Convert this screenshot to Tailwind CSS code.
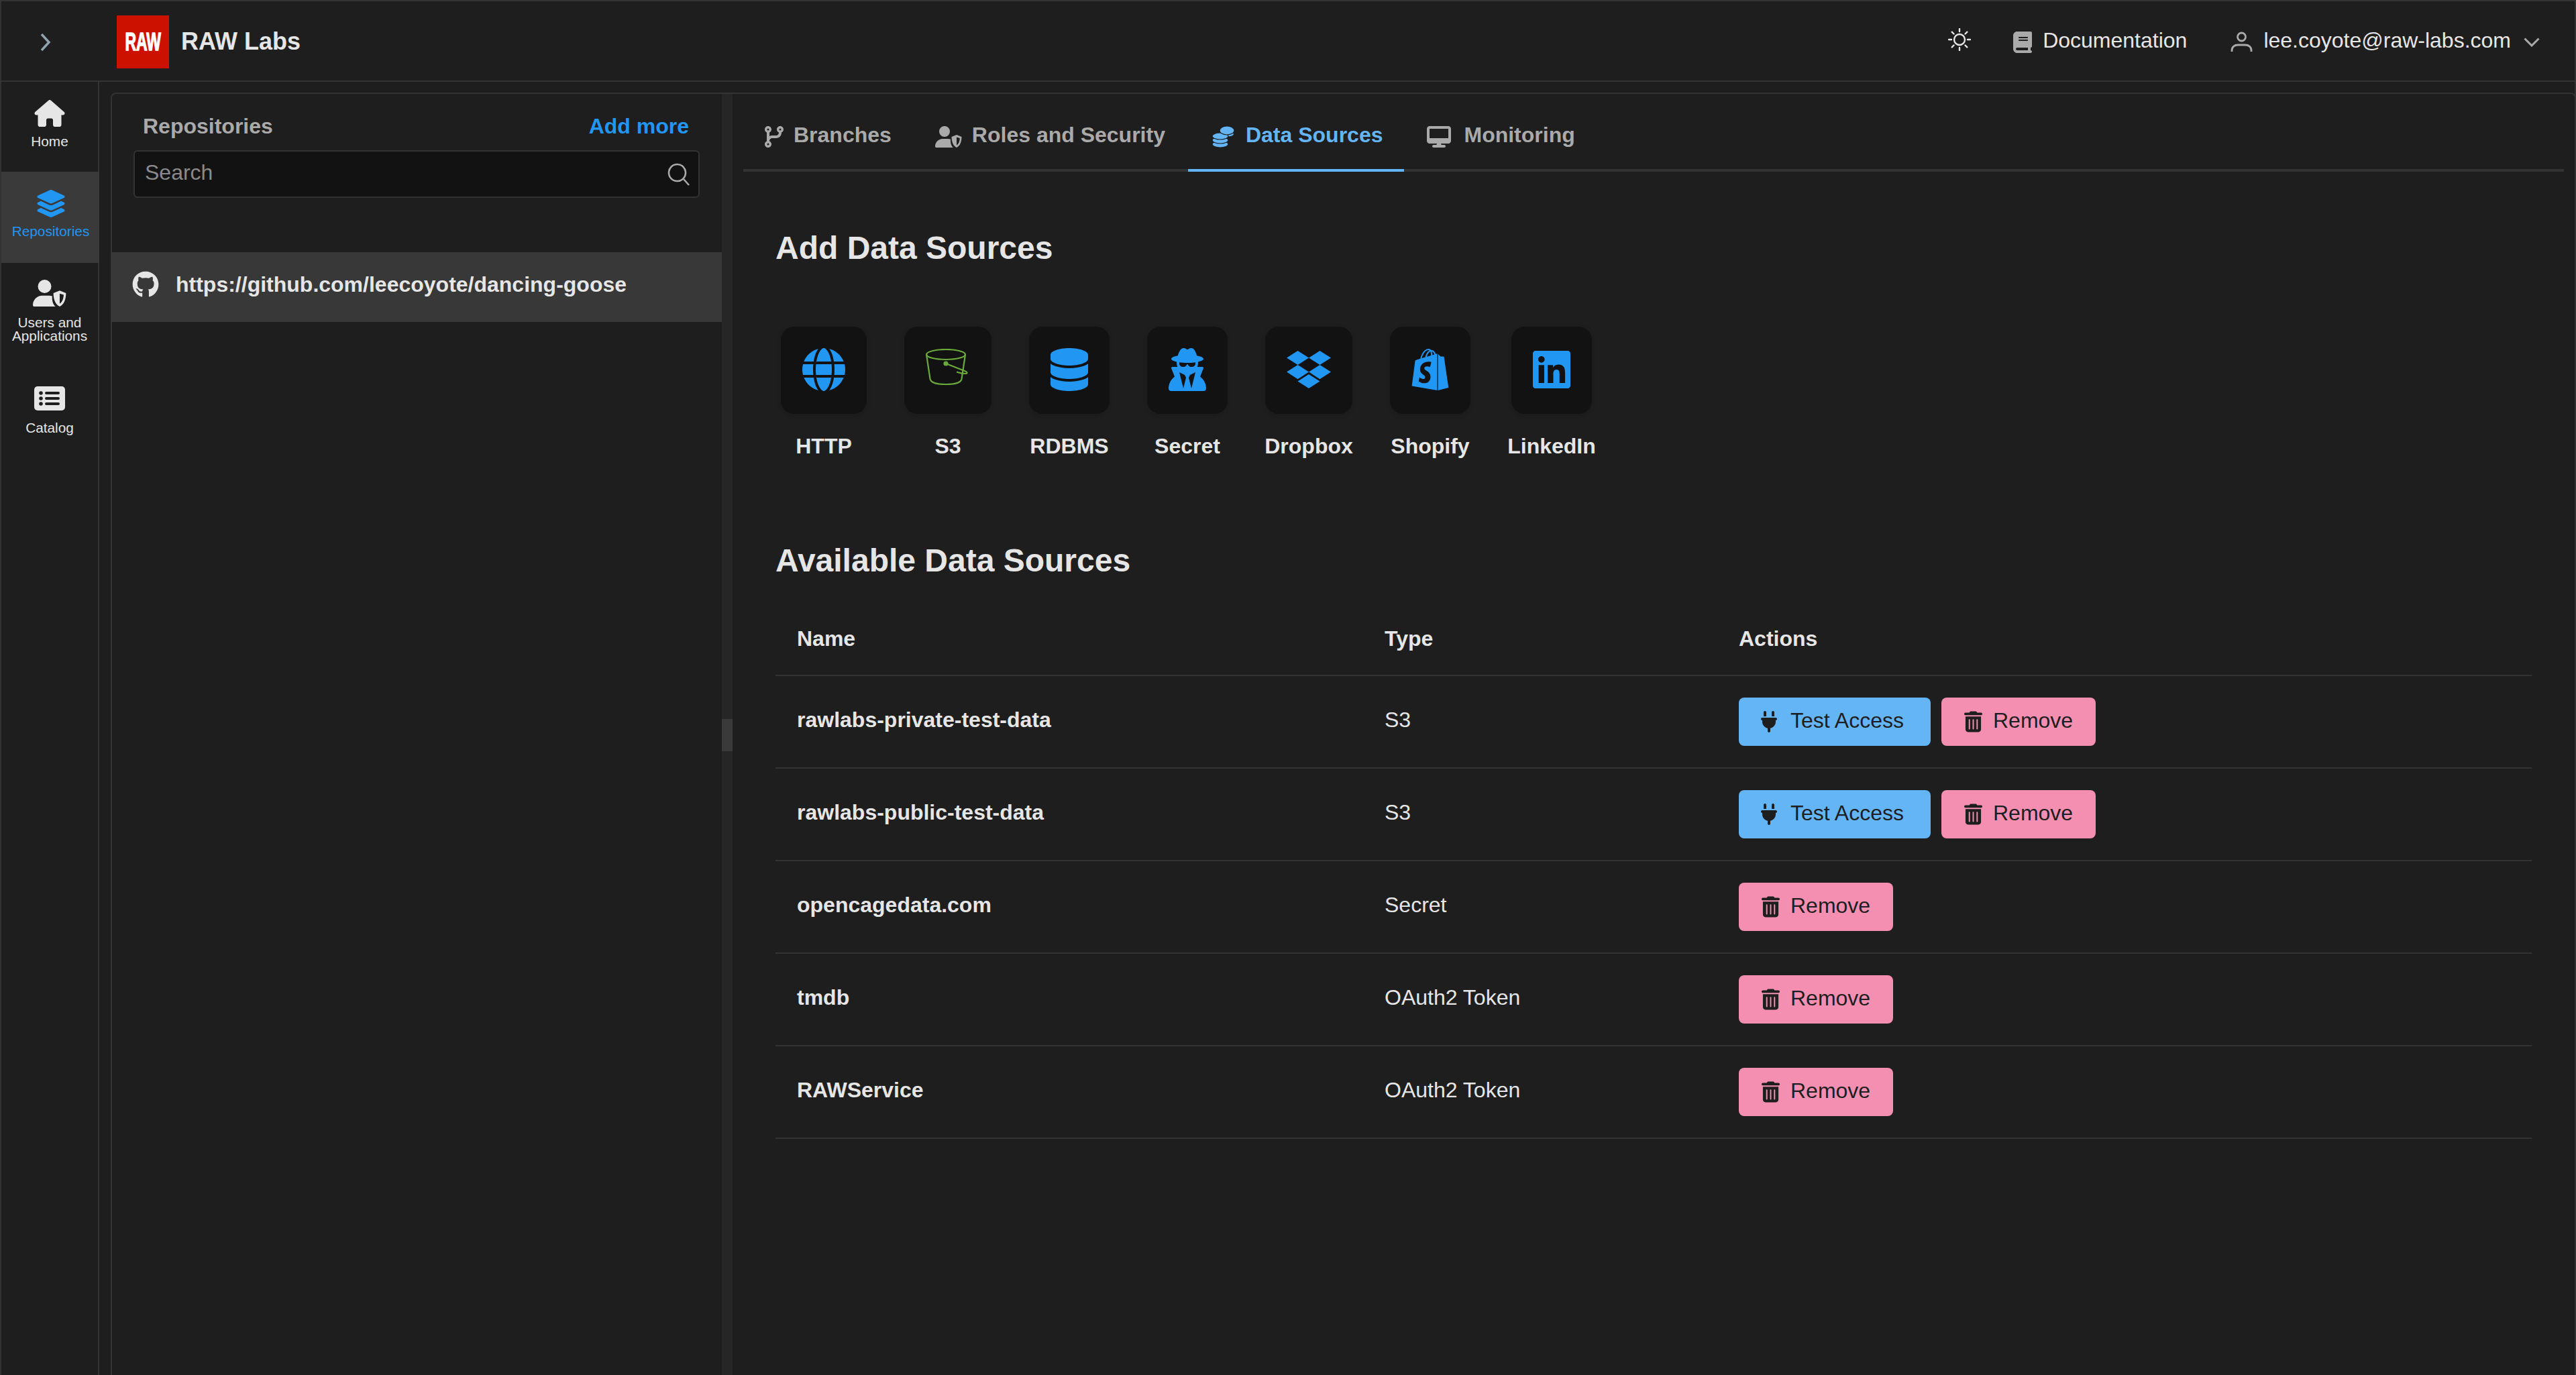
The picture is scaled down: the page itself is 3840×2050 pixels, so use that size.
<!doctype html>
<html>
<head>
<meta charset="utf-8">
<script src="https://cdn.jsdelivr.net/npm/@tailwindcss/browser@4"></script>
</head>
<body class="m-0 bg-[#1e1e1e]">
<div class="w-[3840px] h-[2050px] overflow-hidden flex flex-col bg-[#1e1e1e] border-t-2 border-l-2 border-r-2 border-[#333] text-[#e6e6e6] font-['Liberation_Sans',sans-serif]">

  <!-- Header -->
  <header class="h-[120px] shrink-0 flex items-center border-b-2 border-[#333]">
    <div class="w-[144px] shrink-0 flex justify-center">
      <svg class="w-[16px] h-[26px] ml-[-12px] mt-[3px]" viewBox="0 0 16 26" fill="none" stroke="#90a4ae" stroke-width="3.500"><path d="M2 1l11 12L2 25"/></svg>
    </div>
    <div class="w-[78px] h-[79px] ml-[28px] mt-[2px] bg-[#cc1100] flex items-center justify-center overflow-hidden">
      <span class="text-white font-bold text-[37px] leading-none [-webkit-text-stroke:1.500px_white] [transform:scaleX(0.62)]">RAW</span>
    </div>
    <span class="ml-[18px] mt-[2px] text-[36px] font-bold">RAW Labs</span>
    <div class="ml-auto flex items-center h-full">
      <svg class="w-[34px] h-[34px] mb-[5px]" viewBox="0 0 34 34" fill="none" stroke="#e6e6e6" stroke-width="2.400" stroke-linecap="round"><circle cx="17" cy="17" r="8"/><path d="M17 1v4M17 29v4M1 17h4M29 17h4M5.700 5.700l2.800 2.800M25.500 25.500l2.800 2.800M5.700 28.300l2.800-2.800M25.500 8.500l2.800-2.800"/></svg>
      <svg class="w-[28px] h-[32px] ml-[63px] mt-[3px]" viewBox="0 0 448 512" fill="#aaa"><path d="M96 0C43 0 0 43 0 96V416c0 53 43 96 96 96H384h32c17.700 0 32-14.300 32-32s-14.300-32-32-32V384c17.700 0 32-14.300 32-32V32c0-17.700-14.300-32-32-32H384 96zm0 384H352v64H96c-17.700 0-32-14.300-32-32s14.300-32 32-32zm32-240c0-8.800 7.200-16 16-16H336c8.800 0 16 7.200 16 16s-7.200 16-16 16H144c-8.800 0-16-7.200-16-16zm16 48H336c8.800 0 16 7.200 16 16s-7.200 16-16 16H144c-8.800 0-16-7.200-16-16s7.200-16 16-16z"/></svg>
      <span class="ml-[16px] text-[32px] mb-[3px]">Documentation</span>
      <svg class="w-[33px] h-[30px] ml-[65px] mt-[2px]" viewBox="0 0 33 30" fill="none" stroke="#aaa" stroke-width="2.800"><circle cx="16.500" cy="8" r="6"/><path d="M2 30v-2c0-5 4-8 9-8h11c5 0 9 3 9 8v2"/></svg>
      <span class="ml-[16px] text-[32px] mb-[3px]">lee.coyote@raw-labs.com</span>
      <svg class="w-[24px] h-[14px] ml-[19px] mr-[52px] mt-[3px]" viewBox="0 0 24 14" fill="none" stroke="#aaa" stroke-width="3"><path d="M1.500 1.500L12 12 22.500 1.500"/></svg>
    </div>
  </header>

  <div class="flex-1 flex min-h-0">
    <!-- Nav rail -->
    <nav class="w-[146px] shrink-0 border-r-2 border-[#333] flex flex-col text-[20.800px] leading-[20px] text-center">
      <a class="h-[134px] flex flex-col items-center pt-[27px]">
        <svg class="w-[46px] h-[40px]" viewBox="0 0 576 512" fill="#e6e6e6"><path d="M575.800 255.500c0 18-15 32.100-32 32.100h-32l.7 160.200c0 2.700-.2 5.400-.5 8.100V472c0 22.100-17.900 40-40 40H456c-1.100 0-2.200 0-3.300-.1c-1.400 .1-2.800 .1-4.200 .1H416 392c-22.100 0-40-17.900-40-40V448 384c0-17.700-14.300-32-32-32H256c-17.700 0-32 14.300-32 32v64 24c0 22.100-17.900 40-40 40H160 128.100c-1.500 0-3-.1-4.500-.2c-1.200 .1-2.400 .2-3.600 .2H104c-22.100 0-40-17.900-40-40V360c0-.9 0-1.900 .1-2.800V287.600H32c-18 0-32-14-32-32.100c0-9 3-17 10-24L266.400 8c7-7 15-8 22-8s15 2 21 7L564.800 231.500c8 7 12 15 11 24z"/></svg>
        <span class="mt-[12px]">Home</span>
      </a>
      <a class="h-[136px] bg-[#3a3a3a] ml-[-2px] mr-[-2px] pl-[3px] flex flex-col items-center pt-[27px] text-[#2196f3]">
        <svg class="w-[46px] h-[41px]" viewBox="0 0 576 512" fill="#2196f3"><path d="M264.500 5.200c14.900-6.900 32.100-6.900 47 0l218.600 101c8.500 3.900 13.900 12.400 13.900 21.800s-5.400 17.900-13.900 21.800l-218.600 101c-14.900 6.900-32.100 6.900-47 0L45.900 149.800C37.400 145.800 32 137.300 32 128s5.400-17.900 13.900-21.800L264.500 5.200zM476.900 209.600l53.200 24.600c8.500 3.900 13.900 12.400 13.900 21.800s-5.400 17.900-13.900 21.800l-218.600 101c-14.900 6.900-32.100 6.900-47 0L45.900 277.800C37.400 273.800 32 265.300 32 256s5.400-17.900 13.900-21.800l53.200-24.600 152 70.200c23.400 10.800 50.400 10.800 73.800 0l152-70.200zm-152 198.200l152-70.200 53.200 24.600c8.500 3.900 13.900 12.400 13.900 21.800s-5.400 17.900-13.900 21.800l-218.600 101c-14.900 6.900-32.100 6.900-47 0L45.900 405.800C37.400 401.800 32 393.300 32 384s5.400-17.900 13.900-21.800l53.200-24.600 152 70.200c23.400 10.800 50.400 10.800 73.800 0z"/></svg>
        <span class="mt-[11px]">Repositories</span>
      </a>
      <a class="h-[160px] flex flex-col items-center pt-[25px]">
        <svg class="w-[50px] h-[40px]" viewBox="0 0 640 512" fill="#e6e6e6"><path d="M224 256A128 128 0 1 0 224 0a128 128 0 1 0 0 256zm-45.700 48C79.800 304 0 383.800 0 482.300C0 498.700 13.300 512 29.700 512H432c-30-22-60-70-64-150c-1-20 0-40 2-48c-20-6-40-10-60-10H178.300z"/><path fill-rule="evenodd" d="M512 208L392 256c0 120 40 220 120 256c80-36 120-136 120-256L512 208zm0 56v192c50-28 72-90 76-168L512 264z"/></svg>
        <span class="mt-[14px]">Users and<br>Applications</span>
      </a>
      <a class="h-[136px] flex flex-col items-center pt-[24px]">
        <svg class="w-[46px] h-[36px]" viewBox="0 0 46 36"><rect width="46" height="36" rx="5" fill="#e6e6e6"/><circle cx="10" cy="10" r="2.800" fill="#1e1e1e"/><circle cx="10" cy="18" r="2.800" fill="#1e1e1e"/><circle cx="10" cy="26" r="2.800" fill="#1e1e1e"/><rect x="16" y="8" width="22" height="4" rx="2" fill="#1e1e1e"/><rect x="16" y="16" width="22" height="4" rx="2" fill="#1e1e1e"/><rect x="16" y="24" width="22" height="4" rx="2" fill="#1e1e1e"/></svg>
        <span class="mt-[16px]">Catalog</span>
      </a>
    </nav>

    <!-- Main card -->
    <div class="flex-1 min-w-0 flex ml-[17px] mt-[16px] mr-[-2px] border-l-2 border-t-2 border-r-2 border-[#333] rounded-tl-[8px] rounded-tr-[8px]">
      <!-- Repositories panel -->
      <aside class="w-[909px] shrink-0 flex flex-col">
        <div class="h-[69px] flex items-center justify-between pl-[46px] pr-[49px] pt-[26px] text-[32px] font-bold">
          <span class="text-[#aaa]">Repositories</span>
          <span class="text-[#2196f3]">Add more</span>
        </div>
        <div class="ml-[32px] mr-[33px] mt-[15px] h-[71px] flex items-center justify-between pl-[15px] pr-[16px] bg-[#121212] border-2 border-[#333] rounded-[6px]">
          <span class="text-[32px] text-[#8a8a8a] mb-[6px]">Search</span>
          <svg class="w-[34px] h-[34px] mr-[-4px]" viewBox="0 0 34 34" fill="none" stroke="#aaa" stroke-width="2.600"><circle cx="14.500" cy="14.500" r="12.500"/><path d="M24 24l8 9"/></svg>
        </div>
        <div class="mt-[81px] h-[104px] bg-[#383838] flex items-center pl-[30px] ml-[-2px] text-[32px] font-bold">
          <svg class="w-[40px] h-[40px] mb-[8px] ml-[2px]" viewBox="0 0 496 512" fill="#e6e6e6"><path d="M165.900 397.400c0 2-2.300 3.600-5.200 3.600-3.300 0-5.600-1.600-5.600-3.600 0-2 2.300-3.600 5.200-3.600 3-.3 5.600 1.300 5.600 3.600zm-31.100-4.500c-.7 2 1.300 4.300 4.300 4.900 2.600 1 5.600 0 6.200-2s-1.300-4.300-4.300-5c-2.600-.7-5.500.3-6.200 2.100zm44.200-1.700c-2.900.7-4.900 2.600-4.600 4.900.3 2 2.900 3.300 5.900 2.600 2.900-.7 4.900-2.600 4.600-4.600-.3-1.900-3-3.200-5.900-2.900zM244.800 8C106.100 8 0 113.300 0 252c0 110.900 69.800 205.800 169.500 239.200 12.800 2.300 17.300-5.600 17.300-12.100 0-6.200-.3-40.400-.3-61.400 0 0-70 15-84.700-29.800 0 0-11.400-29.100-27.800-36.600 0 0-22.900-15.700 1.600-15.400 0 0 24.900 2 38.600 25.800 21.900 38.600 58.600 27.500 72.900 20.900 2.300-16 8.800-27.100 16-33.700-55.900-6.200-112.300-14.300-112.300-110.500 0-27.500 7.600-41.300 23.600-58.900-2.600-6.500-11.100-33.300 2.600-67.900 20.900-6.500 69 27 69 27 20-5.600 41.500-8.500 62.800-8.500s42.800 2.900 62.800 8.500c0 0 48.100-33.600 69-27 13.700 34.700 5.200 61.400 2.600 67.900 16 17.700 25.800 31.500 25.800 58.900 0 96.500-58.900 104.200-114.800 110.500 9.200 7.900 17 22.900 17 46.400 0 33.700-.3 75.400-.3 83.600 0 6.500 4.600 14.400 17.300 12.100C428.200 457.800 496 362.900 496 252 496 113.300 383.500 8 244.800 8z"/></svg>
          <span class="ml-[25px] mt-[-8px]">https://github.com/leecoyote/dancing-goose</span>
        </div>
      </aside>

      <!-- Splitter -->
      <div class="w-[16px] shrink-0 bg-[#262626] pt-[932px]">
        <div class="w-full h-[48px] bg-[#3a3a3a]"></div>
      </div>

      <!-- Right panel -->
      <main class="flex-1 min-w-0 flex flex-col pl-[16px] pr-[16px]">
        <div class="h-[116px] shrink-0 flex border-b-[4px] border-[#333] text-[32px] font-bold text-[#aaa]">
          <a class="h-[116px] flex items-center pl-[32px] pr-[32px] pt-[10px] border-b-[4px] border-transparent">
            <svg class="w-[28px] h-[32px] mt-[6px]" viewBox="0 0 448 512" fill="#aaa"><path d="M80 104a24 24 0 1 0 0-48 24 24 0 1 0 0 48zm80-24c0 32.800-19.700 61-48 73.300v87.800c18.800-10.900 40.700-17.100 64-17.100h96c35.300 0 64-28.700 64-64v-6.700C307.700 141 288 112.800 288 80c0-44.200 35.800-80 80-80s80 35.800 80 80c0 32.800-19.700 61-48 73.300V160c0 70.700-57.300 128-128 128H176c-35.300 0-64 28.700-64 64v6.700c28.300 12.300 48 40.500 48 73.300c0 44.200-35.800 80-80 80s-80-35.800-80-80c0-32.800 19.700-61 48-73.300V352 153.300C19.700 141 0 112.800 0 80C0 35.800 35.800 0 80 0s80 35.800 80 80zm232 0a24 24 0 1 0 -48 0 24 24 0 1 0 48 0zM80 456a24 24 0 1 0 0-48 24 24 0 1 0 0 48z"/></svg>
            <span class="ml-[15px]">Branches</span>
          </a>
          <a class="h-[116px] flex items-center pl-[33px] pr-[34px] pt-[10px] border-b-[4px] border-transparent">
            <svg class="w-[40px] h-[32px] mt-[6px]" viewBox="0 0 640 512" fill="#aaa"><path d="M224 256A128 128 0 1 0 224 0a128 128 0 1 0 0 256zm-45.700 48C79.800 304 0 383.800 0 482.300C0 498.700 13.300 512 29.700 512H432c-30-22-60-70-64-150c-1-20 0-40 2-48c-20-6-40-10-60-10H178.300z"/><path fill-rule="evenodd" d="M512 208L392 256c0 120 40 220 120 256c80-36 120-136 120-256L512 208zm0 56v192c50-28 72-90 76-168L512 264z"/></svg>
            <span class="ml-[15px]">Roles and Security</span>
          </a>
          <a class="h-[116px] flex items-center pl-[35px] pr-[32px] pt-[10px] text-[#64b5f6] border-b-[4px] border-[#64b5f6]">
            <svg class="w-[34px] h-[32px] mt-[6px]" viewBox="0 0 34 32" fill="#64b5f6" stroke="#1e1e1e" stroke-width="1.200"><ellipse cx="25" cy="12" rx="8.500" ry="4"/><ellipse cx="13" cy="27" rx="12" ry="5"/><ellipse cx="13" cy="21" rx="12" ry="5"/><ellipse cx="13" cy="15" rx="12" ry="5"/><ellipse cx="23" cy="6.500" rx="11" ry="6.500"/></svg>
            <span class="ml-[17px]">Data Sources</span>
          </a>
          <a class="h-[116px] flex items-center pl-[34px] pr-[32px] pt-[10px] border-b-[4px] border-transparent">
            <svg class="w-[36px] h-[32px] mt-[6px]" viewBox="0 0 576 512" fill="#aaa"><path d="M64 0C28.700 0 0 28.700 0 64V352c0 35.300 28.700 64 64 64H240l-10.700 32H160c-17.700 0-32 14.300-32 32s14.300 32 32 32H416c17.700 0 32-14.300 32-32s-14.300-32-32-32H346.700L336 416H512c35.300 0 64-28.700 64-64V64c0-35.300-28.700-64-64-64H64zM512 64V288H64V64H512z"/></svg>
            <span class="ml-[19px]">Monitoring</span>
          </a>
        </div>

        <div class="pl-[48px] pr-[48px]">
          <h2 class="text-[48px] leading-[56px] font-bold mt-[86px]">Add Data Sources</h2>

          <div class="flex gap-[56px] ml-[8px] mt-[89px] text-[32px] font-bold text-center">
            <div class="w-[128px] flex flex-col items-center">
              <div class="w-[128px] h-[130px] rounded-[20px] bg-[#121212] flex items-center justify-center shadow-[0_2px_6px_rgba(0,0,0,0.15)]">
                <svg class="w-[64px] h-[64px] mt-[-2px]" viewBox="0 0 512 512" fill="#2196f3"><path d="M352 256c0 22.200-1.200 43.600-3.300 64H163.300c-2.200-20.400-3.300-41.800-3.300-64s1.200-43.600 3.300-64H348.700c2.200 20.400 3.300 41.800 3.300 64zm28.800-64H503.900c5.300 20.500 8.100 41.900 8.100 64s-2.800 43.500-8.100 64H380.800c2.100-20.600 3.200-42 3.200-64s-1.100-43.400-3.200-64zm112.600-32H376.700c-10-63.900-29.800-117.400-55.300-151.600c78.300 20.700 142 77.500 171.900 151.600zm-149.100 0H167.700c6.100-36.400 15.500-68.600 27-94.700c10.500-23.600 22.200-40.700 33.500-51.500C239.400 3.200 248.700 0 256 0s16.600 3.200 27.800 13.800c11.300 10.800 23 27.900 33.500 51.500c11.600 26 20.900 58.200 27 94.700zm-209 0H18.600C48.600 85.900 112.200 29.100 190.600 8.400C165.100 42.600 145.300 96.100 135.300 160zM8.100 192H131.200c-2.100 20.600-3.200 42-3.200 64s1.100 43.400 3.200 64H8.100C2.800 299.500 0 278.100 0 256s2.800-43.500 8.100-64zM194.700 446.600c-11.600-26-20.900-58.200-27-94.600H344.300c-6.100 36.400-15.500 68.600-27 94.600c-10.500 23.600-22.200 40.700-33.500 51.500C272.600 508.800 263.300 512 256 512s-16.600-3.200-27.800-13.800c-11.300-10.800-23-27.900-33.500-51.500zM135.300 352c10 63.900 29.800 117.400 55.300 151.600C112.200 482.900 48.600 426.100 18.600 352H135.300zm358.100 0c-30 74.100-93.600 130.900-171.900 151.600c25.500-34.200 45.200-87.700 55.300-151.600H493.400z"/></svg>
              </div>
              <span class="mt-[24px]">HTTP</span>
            </div>
            <div class="w-[130px] flex flex-col items-center">
              <div class="w-[130px] h-[130px] rounded-[20px] bg-[#121212] flex items-center justify-center shadow-[0_2px_6px_rgba(0,0,0,0.15)]">
                <svg class="w-[64px] h-[54px] mt-[-11px] mr-[2px]" viewBox="0 0 64 54" fill="none" stroke="#6aaa3a" stroke-width="2.200"><ellipse cx="30" cy="8.500" rx="29" ry="7.500"/><path d="M1 8.500L6.500 45c1 5 9 8 23.500 8s22.500-3 23.500-8L59 8.500"/><path d="M30 22l28 11c4 1.500 5 4 1 4-4 0-9-1-13-2.500"/><circle cx="30" cy="22" r="2.500" fill="#6aaa3a"/></svg>
              </div>
              <span class="mt-[24px]">S3</span>
            </div>
            <div class="w-[120px] flex flex-col items-center">
              <div class="w-[120px] h-[130px] rounded-[20px] bg-[#121212] flex items-center justify-center shadow-[0_2px_6px_rgba(0,0,0,0.15)]">
                <svg class="w-[56px] h-[64px] mt-[-2px]" viewBox="0 0 448 512" fill="#2196f3"><path d="M448 80v48c0 44.200-100.300 80-224 80S0 172.200 0 128V80C0 35.800 100.300 0 224 0S448 35.800 448 80zM393.200 214.700c20.800-7.400 39.900-16.900 54.800-28.600V288c0 44.200-100.300 80-224 80S0 332.200 0 288V186.100c14.900 11.800 34 21.200 54.800 28.600C99.700 230.700 159.500 240 224 240s124.300-9.300 169.200-25.300zM0 346.100c14.900 11.800 34 21.200 54.800 28.600C99.700 390.700 159.500 400 224 400s124.300-9.300 169.200-25.300c20.800-7.400 39.900-16.900 54.800-28.600V432c0 44.200-100.300 80-224 80S0 476.200 0 432V346.100z"/></svg>
              </div>
              <span class="mt-[24px]">RDBMS</span>
            </div>
            <div class="w-[120px] flex flex-col items-center">
              <div class="w-[120px] h-[130px] rounded-[20px] bg-[#121212] flex items-center justify-center shadow-[0_2px_6px_rgba(0,0,0,0.15)]">
                <svg class="w-[56px] h-[64px] mt-[-2px]" viewBox="0 0 448 512" fill="#2196f3"><path d="M224 16c-6.700 0-10.800-2.800-15.500-6.100C201.900 5.400 194 0 176 0c-30.500 0-52 43.700-66 89.400C62.700 98.100 32 112.200 32 128c0 14.300 25 27.100 64.600 35.900c-.4 4-.6 8-.6 12.100c0 17 3.300 33.200 9.300 48H45.400C38 224 32 230 32 237.400c0 1.700 .3 3.400 1 5l38.800 96.900C28.200 371.800 0 423.800 0 482.300C0 498.700 13.300 512 29.700 512H418.300c16.400 0 29.700-13.300 29.700-29.700c0-58.500-28.200-110.400-71.700-143L415 242.400c.6-1.600 1-3.300 1-5c0-7.400-6-13.400-13.400-13.400H342.700c6-14.800 9.300-31 9.300-48c0-4.100-.2-8.100-.6-12.100C391 155.100 416 142.300 416 128c0-15.800-30.700-29.900-78-38.600C324 43.700 302.500 0 272 0c-18 0-25.900 5.400-32.500 9.900c-4.800 3.300-8.800 6.100-15.500 6.100zm56 208H267.600c-16.500 0-31.100-10.600-36.300-26.200c-2.300-7-12.200-7-14.500 0c-5.200 15.600-19.900 26.200-36.300 26.200H168c-22.100 0-40-17.900-40-40V169.600c28.200 4.100 61 6.400 96 6.400s67.800-2.300 96-6.400V184c0 22.100-17.900 40-40 40zm-88 96l16 32L176 480 128 288l64 32zm128-32L272 480 240 352l16-32 64-32z"/></svg>
              </div>
              <span class="mt-[24px]">Secret</span>
            </div>
            <div class="w-[130px] flex flex-col items-center">
              <div class="w-[130px] h-[130px] rounded-[20px] bg-[#121212] flex items-center justify-center shadow-[0_2px_6px_rgba(0,0,0,0.15)]">
                <svg class="w-[66px] h-[64px] mt-[-2px]" viewBox="0 0 528 512" fill="#2196f3"><path d="M264.400 116.300l-132 84.300 132 84.300-132 84.300L0 284.100l132.300-84.300L0 116.300 132.300 32l132.100 84.300zM131.600 395.700l132-84.300 132 84.300-132 84.300-132-84.300zm132.800-111.600l132-84.300-132-83.600L395.700 32 528 116.300l-132.300 84.300L528 284.800l-132.300 84.300-131.300-85z"/></svg>
              </div>
              <span class="mt-[24px]">Dropbox</span>
            </div>
            <div class="w-[120px] flex flex-col items-center">
              <div class="w-[120px] h-[130px] rounded-[20px] bg-[#121212] flex items-center justify-center shadow-[0_2px_6px_rgba(0,0,0,0.15)]">
                <svg class="w-[56px] h-[64px] mt-[-2px]" viewBox="0 0 448 512" fill="#2196f3"><path d="M388.320 104.100a4.660 4.660 0 0 0-4.400-4c-2 0-37.230-.8-37.230-.8s-21.610-20.820-29.620-28.830V503.200L442.760 472S388.720 106.500 388.320 104.100ZM288.650 70.470a116.670 116.670 0 0 0-7.210-17.610C271 32.850 255.420 22 237 22a15 15 0 0 0-4 .4c-.4-.8-1.200-1.200-1.600-2C223.400 11.630 213 7.630 200.580 8c-24 .8-48 18-67.250 48.830-13.610 21.620-24 48.840-26.820 70.060-27.620 8.400-46.830 14.410-47.230 14.810-14 4.400-14.410 4.800-16 18-1.200 10-38 291.820-38 291.820L307.860 504V65.670a41.660 41.660 0 0 0-4.400.4S297.860 67.670 288.650 70.470ZM233.410 87.690c-16 4.800-33.630 10.400-50.840 15.610 4.800-18.820 14.410-37.630 25.620-50 4.400-4.400 10.410-9.610 17.210-12.810C232.210 54.860 233.810 74.480 233.410 87.690ZM200.580 24.440A27.490 27.490 0 0 1 215 28c-6.400 3.200-12.810 8.410-18.810 14.410-15.210 16.420-26.820 42-31.620 66.450-14.420 4.410-28.830 8.810-42 12.810C131.330 83.280 163.750 25.240 200.580 24.440ZM154.150 244.610c1.600 25.610 69.250 31.220 73.250 91.660 2.800 47.640-25.220 80.060-65.650 82.470-48.830 3.200-75.650-25.620-75.650-25.620l10.400-44s26.820 20.420 48.440 18.820c14-.8 19.220-12.410 18.810-20.420-2-33.620-57.240-31.620-60.840-86.860-3.200-46.440 27.220-93.270 94.470-97.680 26-1.600 39.230 4.810 39.230 4.810L221.400 225.390s-17.210-8-37.630-6.400C154.150 221 153.750 239.800 154.150 244.610ZM249.420 82.880c0-12-1.600-29.220-7.210-43.630 18.420 3.600 27.220 24 31.230 36.430Q262.630 78.680 249.420 82.880Z"/></svg>
              </div>
              <span class="mt-[24px]">Shopify</span>
            </div>
            <div class="w-[130px] flex flex-col items-center">
              <div class="w-[120px] h-[130px] rounded-[20px] bg-[#121212] flex items-center justify-center shadow-[0_2px_6px_rgba(0,0,0,0.15)]">
                <svg class="w-[56px] h-[64px] mt-[-2px]" viewBox="0 0 448 512" fill="#2196f3"><path d="M416 32H31.900C14.300 32 0 46.500 0 64.300v383.400C0 465.500 14.300 480 31.900 480H416c17.600 0 32-14.500 32-32.300V64.300c0-17.800-14.400-32.300-32-32.300zM135.400 416H69V202.200h66.500V416zm-33.200-243c-21.300 0-38.500-17.300-38.500-38.500S80.900 96 102.200 96c21.200 0 38.500 17.300 38.500 38.500 0 21.300-17.200 38.500-38.500 38.500zm282.100 243h-66.400V312c0-24.800-.5-56.700-34.500-56.700-34.600 0-39.900 27-39.900 54.900V416h-66.400V202.200h63.700v29.200h.9c8.900-16.800 30.600-34.500 62.900-34.500 67.200 0 79.700 44.300 79.700 101.900V416z"/></svg>
              </div>
              <span class="mt-[24px]">LinkedIn</span>
            </div>
          </div>

          <h2 class="text-[48px] leading-[56px] font-bold mt-[119px]">Available Data Sources</h2>

          <table class="w-full mt-[39px] text-[32px] border-collapse">
            <thead>
              <tr class="h-[104px] border-b-2 border-[#333] font-bold text-left">
                <th class="w-[876px] pl-[32px] pb-[6px]">Name</th>
                <th class="w-[528px] pl-[32px] pb-[6px]">Type</th>
                <th class="pl-[32px] pb-[6px]">Actions</th>
              </tr>
            </thead>
            <tbody>
              <tr class="h-[138px] border-b-2 border-[#333]">
                <td class="pl-[32px] font-bold pb-[6px]">rawlabs-private-test-data</td>
                <td class="pl-[32px] pb-[6px]">S3</td>
                <td class="pl-[32px]">
                  <div class="flex gap-[16px]">
                    <button class="h-[72px] w-[286px] flex items-center pl-[33px] bg-[#64b5f6] text-[#1e1e1e] rounded-[8px]">
                      <svg class="w-[24px] h-[32px]" viewBox="0 0 384 512" fill="#1e1e1e"><path d="M96 0C78.300 0 64 14.300 64 32v96h64V32c0-17.700-14.300-32-32-32zM288 0c-17.700 0-32 14.300-32 32v96h64V32c0-17.700-14.300-32-32-32zM32 160c-17.700 0-32 14.300-32 32s14.300 32 32 32v32c0 77.400 55 142 128 156.800V480c0 17.700 14.300 32 32 32s32-14.300 32-32V412.800C297 398 352 333.400 352 256V224c17.700 0 32-14.300 32-32s-14.300-32-32-32H32z"/></svg>
                      <span class="ml-[20px] mt-[-4px]">Test Access</span>
                    </button>
                    <button class="h-[72px] w-[230px] flex items-center pl-[34px] bg-[#f48fb1] text-[#1e1e1e] rounded-[8px]">
                      <svg class="w-[27px] h-[32px]" viewBox="0 0 448 512" fill="#1e1e1e"><path d="M135.200 17.700C140.600 6.800 151.700 0 163.800 0H284.200c12.100 0 23.200 6.800 28.600 17.700L320 32h96c17.700 0 32 14.300 32 32s-14.300 32-32 32H32C14.300 96 0 81.700 0 64S14.300 32 32 32h96l7.200-14.300zM32 128H416V448c0 35.300-28.700 64-64 64H96c-35.300 0-64-28.700-64-64V128zm96 64c-8.800 0-16 7.200-16 16V432c0 8.800 7.200 16 16 16s16-7.200 16-16V208c0-8.800-7.200-16-16-16zm96 0c-8.800 0-16 7.200-16 16V432c0 8.800 7.200 16 16 16s16-7.200 16-16V208c0-8.800-7.200-16-16-16zm96 0c-8.800 0-16 7.200-16 16V432c0 8.800 7.200 16 16 16s16-7.200 16-16V208c0-8.800-7.200-16-16-16z"/></svg>
                      <span class="ml-[16px] mt-[-4px]">Remove</span>
                    </button>
                  </div>
                </td>
              </tr>
              <tr class="h-[138px] border-b-2 border-[#333]">
                <td class="pl-[32px] font-bold pb-[6px]">rawlabs-public-test-data</td>
                <td class="pl-[32px] pb-[6px]">S3</td>
                <td class="pl-[32px]">
                  <div class="flex gap-[16px]">
                    <button class="h-[72px] w-[286px] flex items-center pl-[33px] bg-[#64b5f6] text-[#1e1e1e] rounded-[8px]">
                      <svg class="w-[24px] h-[32px]" viewBox="0 0 384 512" fill="#1e1e1e"><path d="M96 0C78.300 0 64 14.300 64 32v96h64V32c0-17.700-14.300-32-32-32zM288 0c-17.700 0-32 14.300-32 32v96h64V32c0-17.700-14.300-32-32-32zM32 160c-17.700 0-32 14.300-32 32s14.300 32 32 32v32c0 77.400 55 142 128 156.800V480c0 17.700 14.300 32 32 32s32-14.300 32-32V412.800C297 398 352 333.400 352 256V224c17.700 0 32-14.300 32-32s-14.300-32-32-32H32z"/></svg>
                      <span class="ml-[20px] mt-[-4px]">Test Access</span>
                    </button>
                    <button class="h-[72px] w-[230px] flex items-center pl-[34px] bg-[#f48fb1] text-[#1e1e1e] rounded-[8px]">
                      <svg class="w-[27px] h-[32px]" viewBox="0 0 448 512" fill="#1e1e1e"><path d="M135.200 17.700C140.600 6.800 151.700 0 163.800 0H284.200c12.100 0 23.200 6.800 28.600 17.700L320 32h96c17.700 0 32 14.300 32 32s-14.300 32-32 32H32C14.300 96 0 81.700 0 64S14.300 32 32 32h96l7.200-14.300zM32 128H416V448c0 35.300-28.700 64-64 64H96c-35.300 0-64-28.700-64-64V128zm96 64c-8.800 0-16 7.200-16 16V432c0 8.800 7.200 16 16 16s16-7.200 16-16V208c0-8.800-7.200-16-16-16zm96 0c-8.800 0-16 7.200-16 16V432c0 8.800 7.200 16 16 16s16-7.200 16-16V208c0-8.800-7.200-16-16-16zm96 0c-8.800 0-16 7.200-16 16V432c0 8.800 7.200 16 16 16s16-7.200 16-16V208c0-8.800-7.200-16-16-16z"/></svg>
                      <span class="ml-[16px] mt-[-4px]">Remove</span>
                    </button>
                  </div>
                </td>
              </tr>
              <tr class="h-[138px] border-b-2 border-[#333]">
                <td class="pl-[32px] font-bold pb-[6px]">opencagedata.com</td>
                <td class="pl-[32px] pb-[6px]">Secret</td>
                <td class="pl-[32px]">
                  <button class="h-[72px] w-[230px] flex items-center pl-[34px] bg-[#f48fb1] text-[#1e1e1e] rounded-[8px]">
                    <svg class="w-[27px] h-[32px]" viewBox="0 0 448 512" fill="#1e1e1e"><path d="M135.200 17.700C140.600 6.800 151.700 0 163.800 0H284.200c12.100 0 23.200 6.800 28.600 17.700L320 32h96c17.700 0 32 14.300 32 32s-14.300 32-32 32H32C14.300 96 0 81.700 0 64S14.300 32 32 32h96l7.200-14.300zM32 128H416V448c0 35.300-28.700 64-64 64H96c-35.300 0-64-28.700-64-64V128zm96 64c-8.800 0-16 7.200-16 16V432c0 8.800 7.200 16 16 16s16-7.200 16-16V208c0-8.800-7.200-16-16-16zm96 0c-8.800 0-16 7.200-16 16V432c0 8.800 7.200 16 16 16s16-7.200 16-16V208c0-8.800-7.200-16-16-16zm96 0c-8.800 0-16 7.200-16 16V432c0 8.800 7.200 16 16 16s16-7.200 16-16V208c0-8.800-7.200-16-16-16z"/></svg>
                    <span class="ml-[16px] mt-[-4px]">Remove</span>
                  </button>
                </td>
              </tr>
              <tr class="h-[138px] border-b-2 border-[#333]">
                <td class="pl-[32px] font-bold pb-[6px]">tmdb</td>
                <td class="pl-[32px] pb-[6px]">OAuth2 Token</td>
                <td class="pl-[32px]">
                  <button class="h-[72px] w-[230px] flex items-center pl-[34px] bg-[#f48fb1] text-[#1e1e1e] rounded-[8px]">
                    <svg class="w-[27px] h-[32px]" viewBox="0 0 448 512" fill="#1e1e1e"><path d="M135.200 17.700C140.600 6.800 151.700 0 163.800 0H284.200c12.100 0 23.200 6.800 28.600 17.700L320 32h96c17.700 0 32 14.300 32 32s-14.300 32-32 32H32C14.300 96 0 81.700 0 64S14.300 32 32 32h96l7.200-14.300zM32 128H416V448c0 35.300-28.700 64-64 64H96c-35.300 0-64-28.700-64-64V128zm96 64c-8.800 0-16 7.200-16 16V432c0 8.800 7.200 16 16 16s16-7.200 16-16V208c0-8.800-7.200-16-16-16zm96 0c-8.800 0-16 7.200-16 16V432c0 8.800 7.200 16 16 16s16-7.200 16-16V208c0-8.800-7.200-16-16-16zm96 0c-8.800 0-16 7.200-16 16V432c0 8.800 7.200 16 16 16s16-7.200 16-16V208c0-8.800-7.200-16-16-16z"/></svg>
                    <span class="ml-[16px] mt-[-4px]">Remove</span>
                  </button>
                </td>
              </tr>
              <tr class="h-[138px] border-b-2 border-[#333]">
                <td class="pl-[32px] font-bold pb-[6px]">RAWService</td>
                <td class="pl-[32px] pb-[6px]">OAuth2 Token</td>
                <td class="pl-[32px]">
                  <button class="h-[72px] w-[230px] flex items-center pl-[34px] bg-[#f48fb1] text-[#1e1e1e] rounded-[8px]">
                    <svg class="w-[27px] h-[32px]" viewBox="0 0 448 512" fill="#1e1e1e"><path d="M135.200 17.700C140.600 6.800 151.700 0 163.800 0H284.200c12.100 0 23.200 6.800 28.600 17.700L320 32h96c17.700 0 32 14.300 32 32s-14.300 32-32 32H32C14.300 96 0 81.700 0 64S14.300 32 32 32h96l7.200-14.300zM32 128H416V448c0 35.300-28.700 64-64 64H96c-35.300 0-64-28.700-64-64V128zm96 64c-8.800 0-16 7.200-16 16V432c0 8.800 7.200 16 16 16s16-7.200 16-16V208c0-8.800-7.200-16-16-16zm96 0c-8.800 0-16 7.200-16 16V432c0 8.800 7.200 16 16 16s16-7.200 16-16V208c0-8.800-7.200-16-16-16zm96 0c-8.800 0-16 7.200-16 16V432c0 8.800 7.200 16 16 16s16-7.200 16-16V208c0-8.800-7.200-16-16-16z"/></svg>
                    <span class="ml-[16px] mt-[-4px]">Remove</span>
                  </button>
                </td>
              </tr>
            </tbody>
          </table>
        </div>
      </main>
    </div>
  </div>
</div>
</body>
</html>
